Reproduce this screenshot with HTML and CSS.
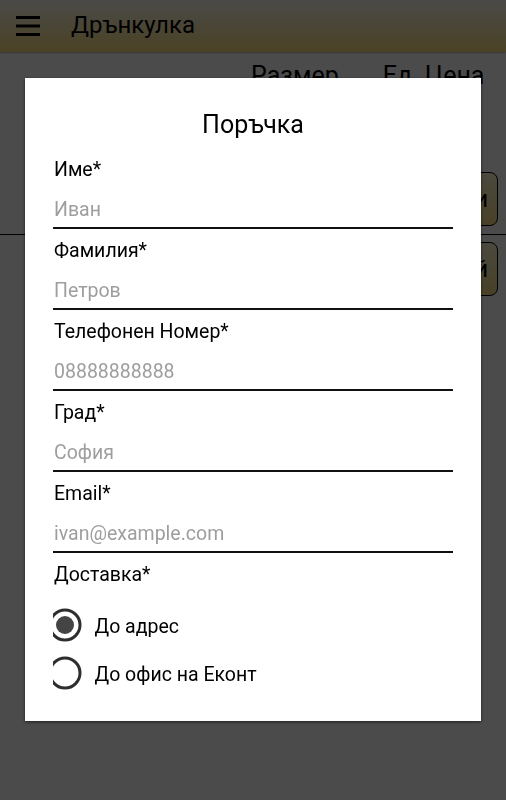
FILE: index.html
```html
<!DOCTYPE html>
<html lang="bg">
<head>
  <meta charset="UTF-8">
  <meta name="viewport" content="width=device-width, initial-scale=1.0">
  <title>Дрънкулка</title>
  <link rel="stylesheet" href="styles.css">
</head>
<body>
  <header class="topbar">
    <svg class="menu" width="24" height="24" viewBox="0 0 24 24">
      <rect x="0" y="2" width="24" height="3"/>
      <rect x="0" y="10.5" width="24" height="3"/>
      <rect x="0" y="19" width="24" height="3"/>
    </svg>
    <span class="brand">Дрънкулка</span>
  </header>

  <div class="headings">
    <span>Размер</span>
    <span>Ед. Цена</span>
  </div>
  <div class="row first">
    <button class="act">Добави</button>
  </div>
  <div class="row">
    <button class="act">Изтрий</button>
  </div>

  <div class="overlay">
    <div class="dialog">
      <h2>Поръчка</h2>

      <div class="field">
        <label for="fname">Име*</label>
        <input type="text" id="fname" placeholder="Иван">
      </div>
      <div class="field">
        <label for="lname">Фамилия*</label>
        <input type="text" id="lname" placeholder="Петров">
      </div>
      <div class="field">
        <label for="phone">Телефонен Номер*</label>
        <input type="text" id="phone" placeholder="08888888888">
      </div>
      <div class="field">
        <label for="city">Град*</label>
        <input type="text" id="city" placeholder="София">
      </div>
      <div class="field">
        <label for="email">Email*</label>
        <input type="text" id="email" placeholder="ivan@example.com">
      </div>

      <div class="label">Доставка*</div>
      <div class="radios">
        <div class="radio">
          <svg width="36" height="36" viewBox="0 0 36 36">
            <circle cx="18" cy="18" r="15" fill="none" stroke="#2e2e2e" stroke-width="3"/>
            <circle cx="18" cy="18" r="9" fill="#444"/>
          </svg>
          <span>До адрес</span>
        </div>
        <div class="radio">
          <svg width="36" height="36" viewBox="0 0 36 36">
            <circle cx="18" cy="18" r="15" fill="none" stroke="#2e2e2e" stroke-width="3"/>
          </svg>
          <span>До офис на Еконт</span>
        </div>
      </div>
    </div>
  </div>
</body>
</html>
```

FILE: styles.css
```css
body {
  margin: 0;
  font-family: Roboto, "Noto Sans", sans-serif;
  background: #fff;
  color: #000;
}

.topbar {
  height: 52px;
  display: flex;
  align-items: center;
  background: linear-gradient(#fbfaf2, #fde07e);
  box-shadow: 0 1px 2px rgba(0, 0, 0, 0.3);
}
.menu {
  margin-left: 16px;
  fill: #000;
}
.brand {
  margin-left: 31px;
  font-size: 24px;
  padding-bottom: 2px;
}

.headings {
  height: 46px;
  display: flex;
  font-size: 25px;
  padding-top: 9px;
  box-sizing: border-box;
}
.headings span:first-child {
  margin-left: 251px;
}
.headings span + span {
  margin-left: 44px;
}

.row {
  display: flex;
  justify-content: flex-end;
  padding: 7px 8px 0 0;
}
.row.first {
  padding: 74px 8px 8px 0;
  border-bottom: 1px solid #000;
}
.act {
  height: 54px;
  padding: 0 9px 0 40px;
  font-family: inherit;
  font-size: 24px;
  background: linear-gradient(#fdf6d4, #f3dc84);
  border: 1px solid #000;
  border-radius: 8px;
}

.overlay {
  position: fixed;
  inset: 0;
  background: rgba(0, 0, 0, 0.705);
  display: flex;
  justify-content: center;
  align-items: flex-start;
  padding-top: 78px;
}
.dialog {
  width: 456px;
  box-sizing: border-box;
  padding: 33px 28px 24px;
  background: #fff;
  box-shadow: 0 1px 3px rgba(0, 0, 0, 0.6);
}
.dialog h2 {
  margin: 0 0 19px;
  font-size: 25px;
  font-weight: 400;
  line-height: 28px;
  text-align: center;
}

.field {
  margin-bottom: 10px;
}
.field label,
.label {
  display: block;
  padding-left: 1px;
  font-size: 19.5px;
  line-height: 24px;
}
.field input {
  display: block;
  width: 100%;
  height: 47px;
  box-sizing: border-box;
  padding: 15px 0 6px 1px;
  border: none;
  border-bottom: 2px solid #111;
  font-family: inherit;
  font-size: 19.5px;
  color: #000;
  outline: none;
}
.field input::placeholder {
  color: #9e9e9e;
}

.radios {
  margin-top: 14px;
  overflow: hidden;
}
.radio {
  height: 48px;
  display: flex;
  align-items: center;
  font-size: 19.5px;
}
.radio svg {
  flex: none;
  margin-left: -6.5px;
}
.radio span {
  margin-left: 12px;
  padding-top: 3px;
}
```
